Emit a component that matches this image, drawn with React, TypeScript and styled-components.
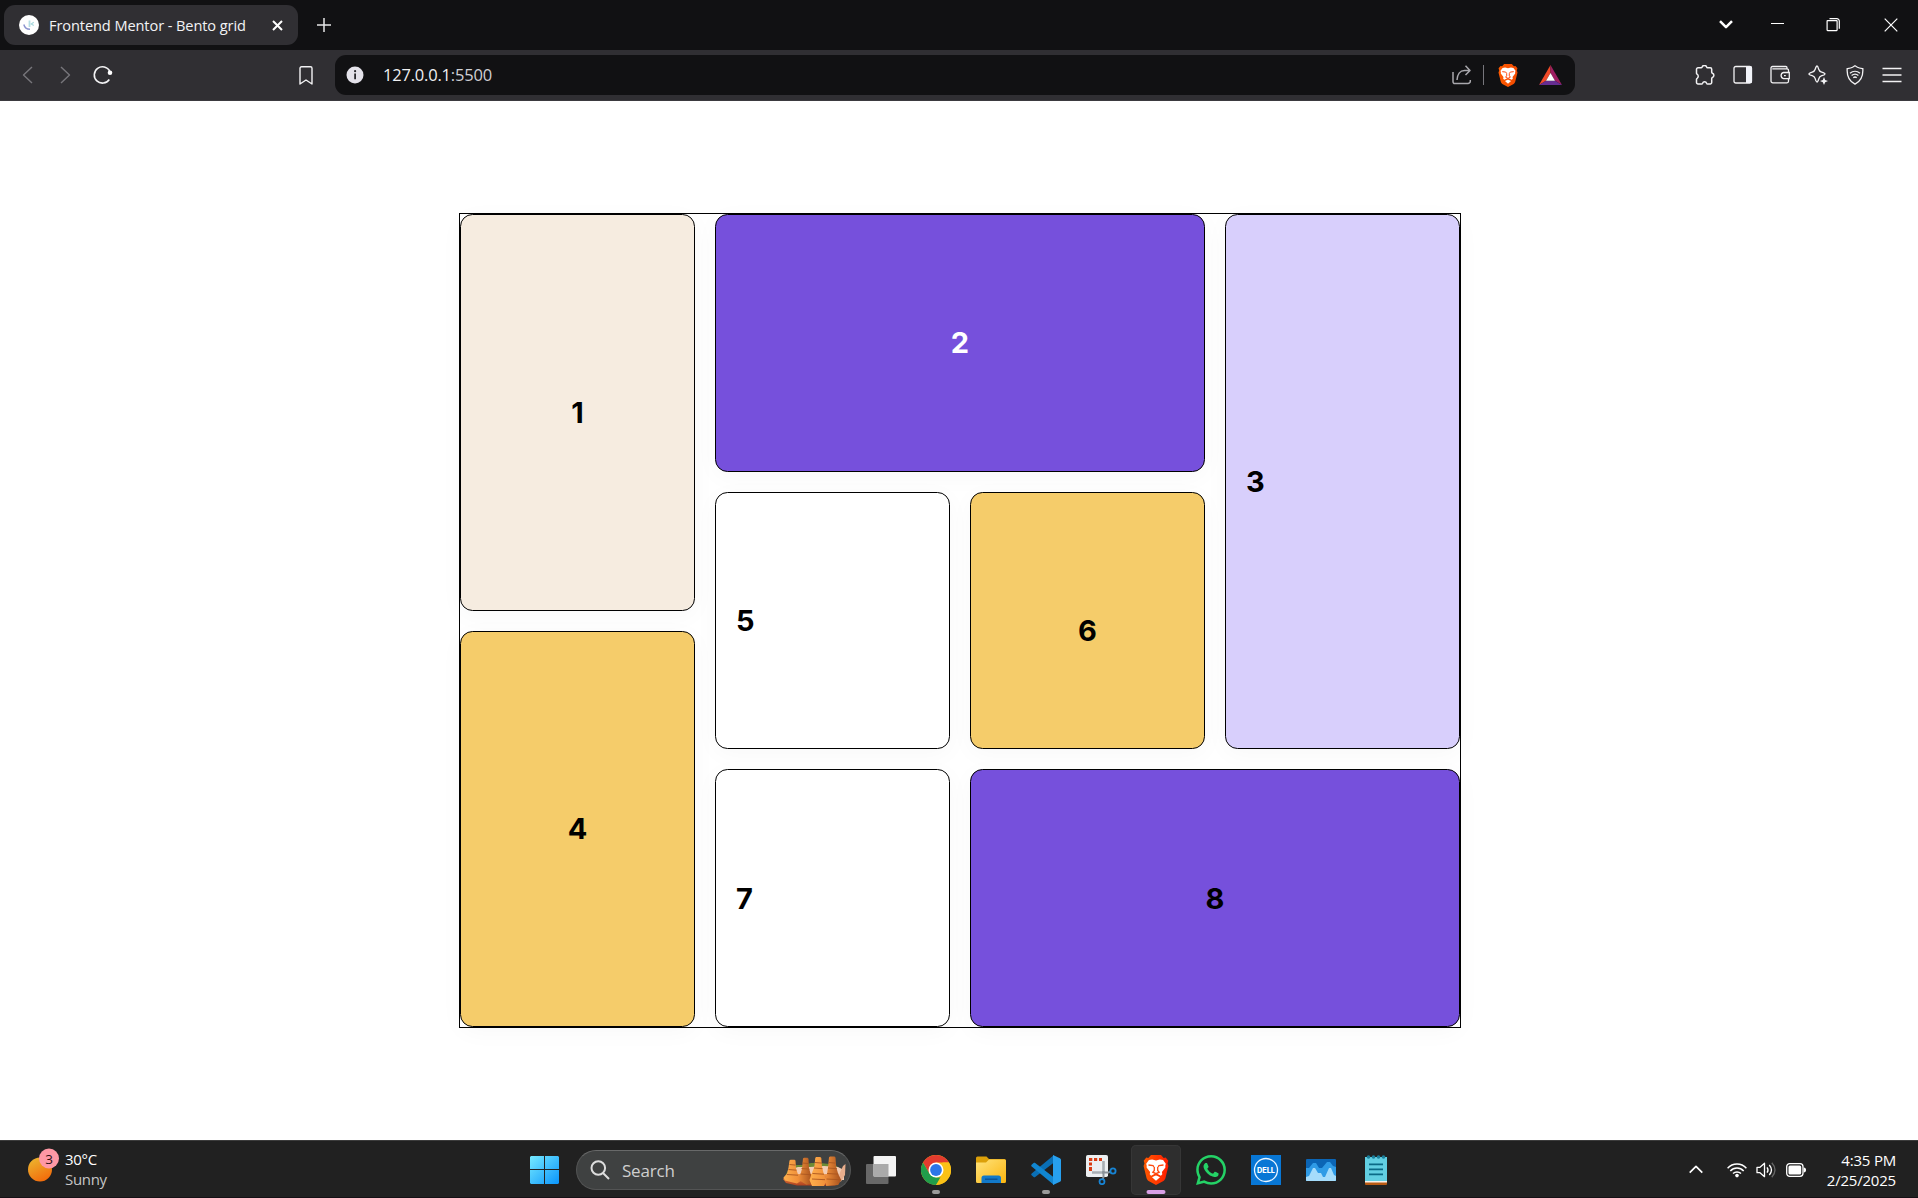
import React from "react";
import styled, { createGlobalStyle } from "styled-components";

const Global = createGlobalStyle`
  * { box-sizing: border-box; }
  html, body { margin: 0; padding: 0; background: #fff; }
  body { overflow: hidden; }
  svg { display: block; flex: none; }
`;

const ui = `"Open Sans", "Noto Sans", sans-serif`;

const Screen = styled.div`
  width: 1918px;
  height: 1198px;
  display: flex;
  flex-direction: column;
  font-family: ${ui};
  background: #fff;
`;

/* ---------- browser chrome ---------- */
const TabStrip = styled.header`
  height: 50px;
  flex: none;
  display: flex;
  align-items: flex-start;
  justify-content: space-between;
  background: #111113;
`;
const TabGroup = styled.div`
  display: flex;
  align-items: center;
  padding: 5px 0 0 4px;
  gap: 19px;
`;
const Tab = styled.div`
  width: 294px;
  height: 40px;
  border-radius: 11px;
  background: #302f33;
  display: flex;
  align-items: center;
  padding: 0 15px 0 15px;
`;
const TabTitle = styled.span`
  flex: 1;
  margin-left: 10px;
  color: #f3f3f5;
  font-size: 14.6px;
  letter-spacing: -0.1px;
  line-height: 20px;
  white-space: nowrap;
`;
const WindowControls = styled.div`
  display: flex;
  align-items: center;
  height: 49px;
  padding-right: 20px;
`;
const ControlSlot = styled.span<{ $gap: number }>`
  margin-left: ${(p) => p.$gap}px;
`;
const Toolbar = styled.nav`
  height: 51px;
  flex: none;
  display: flex;
  align-items: center;
  background: #302f33;
  border-bottom: 1px solid #3b3a3f;
`;
const NavButtons = styled.div`
  display: flex;
  align-items: center;
  width: 335px;
  padding-left: 16px;
`;
const NavIcon = styled.span<{ $left?: number }>`
  margin-left: ${(p) => p.$left ?? 0}px;
`;
const AddressBar = styled.div`
  width: 1240px;
  height: 40px;
  border-radius: 11px;
  background: #111113;
  display: flex;
  align-items: center;
  padding: 0 13px 0 11px;
`;
const Address = styled.span`
  flex: 1;
  margin-left: 19px;
  color: #f0f0f2;
  font-size: 16.5px;
  letter-spacing: -0.2px;
  line-height: 24px;
`;
const Port = styled.span`
  color: #cfcfd3;
`;
const Divider = styled.span`
  width: 1px;
  height: 20px;
  margin: 0 14px 0 11px;
  background: #77767c;
`;
const Extensions = styled.div`
  flex: 1;
  display: flex;
  align-items: center;
  justify-content: flex-end;
  padding-right: 7px;
`;
const ExtensionSlot = styled.span`
  width: 37.400px;
  display: flex;
  justify-content: center;
`;

/* ---------- page ---------- */
const Page = styled.main`
  flex: 1;
  display: flex;
  justify-content: center;
  padding: 112px 0 0 2px;
`;
const Bento = styled.section`
  width: 1002px;
  height: 815px;
  border: 1px solid #000;
  display: grid;
  grid-template-columns: repeat(4, 1fr);
  grid-template-rows: repeat(6, 1fr);
  gap: 20px;
`;
const Card = styled.article<{ $area: string; $bg: string; $ink?: string; $start?: boolean; $drop?: number }>`
  grid-area: ${(p) => p.$area};
  display: flex;
  align-items: center;
  justify-content: ${(p) => (p.$start ? "flex-start" : "center")};
  padding: ${(p) => 21 + (p.$drop ?? 0)}px 20px 20px;
  border: 1px solid #000;
  border-radius: 12.5px;
  background: ${(p) => p.$bg};
  color: ${(p) => p.$ink ?? "#000"};
  box-shadow: 0 5px 25px rgba(0, 0, 0, 0.03);
  font: 700 29px/38px Inter, sans-serif;
`;

const cards = [
  { n: 1, area: "1 / 1 / span 3 / span 1", bg: "#f6ece0" },
  { n: 2, area: "1 / 2 / span 2 / span 2", bg: "#7650dc", ink: "#fff" },
  { n: 3, area: "1 / 4 / span 4 / span 1", bg: "#d8cffc", start: true },
  { n: 4, area: "4 / 1 / span 3 / span 1", bg: "#f5cc6a" },
  { n: 5, area: "3 / 2 / span 2 / span 1", bg: "#fff", start: true },
  { n: 6, area: "3 / 3 / span 2 / span 1", bg: "#f5cc6a", drop: 20 },
  { n: 7, area: "5 / 2 / span 2 / span 1", bg: "#fff", start: true },
  { n: 8, area: "5 / 3 / span 2 / span 2", bg: "#7650dc" },
];

/* ---------- taskbar ---------- */
const Taskbar = styled.footer`
  height: 58px;
  flex: none;
  display: grid;
  grid-template-columns: 530px 1fr auto;
  background: #212121;
  border-top: 1px solid #3c3c3c;
  border-bottom: 1px solid #151015;
`;
const Weather = styled.div`
  display: flex;
  align-items: center;
  padding-left: 27px;
  gap: 6px;
`;
const WeatherIcon = styled.span`
  margin-bottom: 7px;
`;
const WeatherText = styled.div`
  display: flex;
  flex-direction: column;
  font-size: 15px;
  line-height: 20px;
  letter-spacing: -0.3px;
  color: #fff;
`;
const Muted = styled.span`
  color: #c6c6c6;
`;
const Apps = styled.div`
  display: flex;
  align-items: center;
  padding-top: 2px;
`;
const SearchBox = styled.div`
  width: 275px;
  height: 40px;
  margin: 0 2.5px 0 16px;
  border-radius: 20px;
  border: 1px solid #535454;
  border-top-color: #686969;
  background: #3f4141;
  display: flex;
  align-items: center;
  padding: 0 3px 0 13px;
`;
const SearchLabel = styled.span`
  flex: 1;
  margin-left: 12px;
  font-size: 17px;
  letter-spacing: -0.2px;
  color: #cfcfcf;
`;
const AppButton = styled.div<{ $active?: boolean }>`
  width: 50px;
  height: 50px;
  margin: 0 2.5px;
  border-radius: 5px;
  position: relative;
  display: flex;
  align-items: center;
  justify-content: center;
  background: ${(p) => (p.$active ? "#2e2e2e" : "transparent")};
  box-shadow: ${(p) => (p.$active ? "inset 0 0 0 1px #363636" : "none")};
`;
const Indicator = styled.i<{ $active?: boolean }>`
  position: absolute;
  bottom: 1px;
  left: 50%;
  transform: translateX(-50%);
  width: ${(p) => (p.$active ? 19 : 8)}px;
  height: 4px;
  border-radius: 2px;
  background: ${(p) => (p.$active ? "#d9a0e6" : "#9a9a9a")};
`;
const Tray = styled.div`
  display: flex;
  align-items: center;
  padding: 1px 22px 0 0;
`;
const TraySlot = styled.span<{ $right: number }>`
  margin-right: ${(p) => p.$right}px;
`;
const Clock = styled.div`
  width: 71px;
  white-space: nowrap;
  display: flex;
  flex-direction: column;
  align-items: flex-end;
  font-size: 15px;
  line-height: 20px;
  letter-spacing: -0.2px;
  color: #fff;
`;

/* ---------- icons ---------- */
const Favicon = () => (
  <svg width="20" height="20" viewBox="0 0 20 20">
    <circle cx="10" cy="10" r="10" fill="#fff" />
    <path d="M10.5 5.5v6.5" stroke="#b4dde3" strokeWidth="1.8" />
    <path d="M14.8 7.3L12.2 9l2.6 1.6" stroke="#a9d9de" strokeWidth="1.2" fill="none" />
    <path d="M4.8 9.5c.7 2.800 3 4.700 6.200 4.700" stroke="#8c94cf" strokeWidth="1.4" fill="none" />
  </svg>
);
const Line = ({ d, w, h, s = "#f2f2f4", sw = 1.4 }: { d: string; w: number; h: number; s?: string; sw?: number }) => (
  <svg width={w} height={h} viewBox={`0 0 ${w} ${h}`} fill="none" stroke={s} strokeWidth={sw} strokeLinejoin="round">
    <path d={d} />
  </svg>
);
const Reload = () => (
  <svg width="20" height="20" viewBox="0 0 20 20" fill="none" stroke="#f2f2f4" strokeWidth="1.6">
    <path d="M16.300 14.500A8.200 8.200 0 1 1 16.800 6.200" />
    <circle cx="17" cy="7.800" r="2.300" fill="#fff" stroke="none" />
  </svg>
);
const Info = () => (
  <svg width="18" height="18" viewBox="0 0 18 18">
    <circle cx="9" cy="9" r="8.500" fill="#e4e2ea" />
    <path d="M9.100 7.500V13.200" stroke="#29282c" strokeWidth="1.800" fill="none" />
    <circle cx="9.100" cy="5.200" r="1.100" fill="#29282c" />
  </svg>
);
const BraveLion = ({ w, h, id }: { w: number; h: number; id: string }) => (
  <svg width={w} height={h} viewBox="0 0 26 30">
    <defs>
      <linearGradient id={id} x1="0" x2="1">
        <stop offset="0" stopColor="#ff5a00" />
        <stop offset="1" stopColor={id === "lionBig" ? "#ff1c00" : "#f04a00"} />
      </linearGradient>
    </defs>
    <path fill={`url(#${id})`} d="M8 0h10l2.700 3 2-.4 2.600 3.100-.8 2.700.9 2.600-3 12.300c-.4 1.300-1.100 2-2 2.700L13 30l-7.400-4c-.9-.700-1.600-1.400-2-2.700L.6 11l.9-2.600L.7 5.700l2.600-3.100 2 .4z" />
    <path fill="#fff" d="M13 5.500l3.800-.9 3.300.5 2.700 3.700-.5 1.900.1 1.800-3.500 4.500.4 2.200-1.400 1.500-3.300-1.700-1.600-.3-1.600.3-3.300 1.700-1.400-1.500.4-2.200-3.500-4.500.1-1.800-.5-1.900 2.700-3.700 3.300-.5z" />
    <path fill="#fff" d="M9 22.300l4-2.100 4 2.100-4 3.400z" />
    <path fill="none" stroke="#ff4a10" strokeWidth="1.300" d="M5.500 10l4.500.5 1 1.300M20.500 10l-4.500.5-1 1.300M11.300 12v3.500l-1.500 1.700L13 18.700l3.200-1.500-1.500-1.700V12M13 18.700v1.800" />
  </svg>
);
const BatTriangle = () => (
  <svg width="23" height="20" viewBox="0 0 23 20">
    <path fill="#f04a28" d="M11.500 0L0 20l7-4.300 4.500-7.700z" />
    <path fill="#9e1f63" d="M11.500 0L23 20l-7-4.300L11.500 8z" />
    <path fill="#662d91" d="M0 20h23l-7-4.300H7z" />
    <path fill="#fff" d="M11.500 8L7 15.700h9z" />
  </svg>
);
const SidePanel = () => (
  <svg width="20" height="20" viewBox="0 0 20 20">
    <rect x="1" y="1.500" width="17.500" height="16.500" rx="1.800" fill="none" stroke="#f2f2f4" strokeWidth="1.300" />
    <path d="M13 1.500h5a1 1 0 0 1 1 1V17a1 1 0 0 1-1 1h-5z" fill="#f2f4fa" />
  </svg>
);
const Wallet = () => (
  <svg width="20" height="20" viewBox="0 0 20 20" fill="none" stroke="#f2f2f4" strokeWidth="1.300">
    <path d="M18.500 7V5.300a1.500 1.500 0 0 0-1.500-1.500H2.300M17 3.800V2.700a1.200 1.200 0 0 0-1.200-1.200H2.500A1.500 1.500 0 0 0 1 3v13a1.800 1.800 0 0 0 1.800 1.800H17a1.500 1.500 0 0 0 1.500-1.500V14" />
    <path d="M19.300 7.500h-5.800a3.200 3.200 0 0 0 0 6.200h5.800zM14 10.600h1.800" />
  </svg>
);
const Sparkle = () => (
  <svg width="20" height="20" viewBox="0 0 20 20" fill="none" stroke="#f2f2f4" strokeWidth="1.300" strokeLinejoin="round">
    <path d="M9 1c.8 0 1.200 1.600 1.700 3.300.5 1.700 1.300 2.400 3 2.900 1.800.5 3.300 1 3.300 1.800s-1.500 1.200-3.200 1.700-2.500 1.300-3 3S9.800 17 9 17s-1.300-1.500-1.800-3.300c-.5-1.700-1.200-2.500-3-3S1 9.800 1 9s1.500-1.300 3.200-1.800c1.800-.5 2.500-1.200 3-2.900S8.200 1 9 1z" />
    <path fill="#f2f2f4" stroke="#302f33" strokeWidth="1" paintOrder="stroke" d="M16 12l1.200 2.900 2.800 1.100-2.800 1.200L16 20l-1.200-2.800L12 16l2.800-1.100z" />
  </svg>
);
const ShieldWifi = () => (
  <svg width="18" height="20" viewBox="0 0 18 20" fill="none" stroke="#f2f2f4" strokeWidth="1.300">
    <path d="M9 .8l2.500 1.500c1.500.8 3.200 1 5.300 1.300.5 6.900-1.300 12.300-7.800 15.600C2.500 15.900.700 10.500 1.200 3.600c2.100-.3 3.800-.5 5.300-1.300z" />
    <path d="M4 8.300c3-2.700 7-2.700 10 0M5.600 10.600c2.100-1.800 4.700-1.800 6.800 0M7.300 12.700c1.100-.9 2.300-.9 3.400 0" />
  </svg>
);
const Sun = () => (
  <svg width="32" height="36" viewBox="0 0 32 36">
    <defs>
      <linearGradient id="sun" x1="0.200" y1="0" x2="0.700" y2="1">
        <stop offset="0" stopColor="#ecb52f" />
        <stop offset="1" stopColor="#f3690a" />
      </linearGradient>
    </defs>
    <circle cx="13" cy="21.500" r="12" fill="url(#sun)" />
    <circle cx="22" cy="10.500" r="10" fill="#ff98a5" />
    <text x="22" y="15.500" textAnchor="middle" fontFamily="Open Sans" fontSize="13.500" fill="#301015">3</text>
  </svg>
);
const Windows = () => (
  <svg width="30" height="30" viewBox="0 0 30 30">
    <defs>
      <linearGradient id="win" gradientUnits="userSpaceOnUse" x1="0" y1="0" x2="29" y2="29">
        <stop offset="0" stopColor="#78ecff" />
        <stop offset="1" stopColor="#0a94fb" />
      </linearGradient>
    </defs>
    <path fill="url(#win)" d="M1 1H14V14H0V2zM15 1h13l1 1v12H15zM0 15h14v14H1l-1-1zM15 15h14v13l-1 1H15z" />
  </svg>
);
const Towers = () => (
  <svg width="64" height="32" viewBox="0 0 64 32">
    <defs>
      <linearGradient id="clay" x1="0" x2="1">
        <stop offset="0" stopColor="#ffb04d" />
        <stop offset="0.500" stopColor="#f0903a" />
        <stop offset="1" stopColor="#a6501d" />
      </linearGradient>
      <linearGradient id="base" x1="0" y1="0" x2="0" y2="1">
        <stop offset="0" stopColor="#f0994a" />
        <stop offset="1" stopColor="#b0401e" />
      </linearGradient>
    </defs>
    <path fill="#6d8b35" d="M3 20l3-5 6-4 8 0 8-2 10 0 8 1 8 2 3 6z" />
    <path fill="#f2cdb4" d="M6 16l9-3 12 0 14-1 14 1 6 3 0 10H6z" />
    <path fill="#e9ae8c" d="M60 12l2.500-2-.5 11-4 6.500-3 0 2-9z" />
    <path fill="url(#base)" d="M0 25l5-5 10 0 12 0 12 0 14 0 4 5-1 4-4 2.500H14L3 29z" />
    <path fill="url(#clay)" d="M6.500 6.500l1-.8h4l1 .8.5 8 2 6 5 5-6 4-12-3-1.500-3 3.500-4 1.500-6zM20 4.500l1-.8h3.500l1 1 .5 9.500 2 7 1.500 8-6 1.500-8-5 1.500-4 2-7z" />
    <path fill="url(#clay)" d="M32.300 3.800l1-.8h4l1 1 .7 9 2 8 3 5-3 6-12 0-2.500-6 2-6 2.800-7zM46 3.300l1-.8h4.500l1 1 .7 9.500 2 7 3 6-3 5-12 1-1-5 2-8 1-7z" />
    <path fill="none" stroke="#aa561f" strokeWidth=".9" d="M6.500 10.500l6 .6M5.500 15.500l8 .7M4 20.500l11 .7M19.500 9l6 .6M18.500 14.500l8 .7M17.500 20l10.500.7M32 8.500l7 .6M31 14l8.500.7M29.500 19.500l11.500.7M29 25l13 .7M45.500 8.500l7 .6M45 14l9 .7M44 19.500l11.500.7M43.500 25l13 .7" />
  </svg>
);
const TaskView = () => (
  <svg width="30" height="28" viewBox="0 0 30 28">
    <rect x="0" y="8" width="22.500" height="20" rx="1" fill="#686868" />
    <rect x="7.500" y="0" width="22.500" height="20.500" rx="1" fill="#f4f4f4" />
    <path d="M7.500 8h15v12.500h-15z" fill="#aaa" />
  </svg>
);
const Chrome = () => (
  <svg width="30" height="30" viewBox="0 0 30 30">
    <circle cx="15" cy="15" r="15" fill="#fbc116" />
    <path fill="#e33b2e" d="M15 0a15 15 0 0 1 13 7.500H15L8.500 18.750 2 7.500A15 15 0 0 1 15 0z" />
    <path fill="#219d4b" d="M2 7.500l6.500 11.250L15 22.500h6.500L15 30A15 15 0 0 1 2 7.500z" />
    <path fill="#fbc116" d="M28 7.500A15 15 0 0 1 15 30l6.500-11.250V7.500z" />
    <circle cx="15" cy="15" r="7.500" fill="#fff" />
    <circle cx="15" cy="15" r="5.900" fill="#2c76e8" />
  </svg>
);
const Folder = () => (
  <svg width="30" height="28" viewBox="0 0 30 28">
    <defs>
      <linearGradient id="folder" x1="0" y1="0" x2="1" y2="1">
        <stop offset="0" stopColor="#ffe37c" />
        <stop offset="1" stopColor="#fbb50e" />
      </linearGradient>
    </defs>
    <path fill="#dca009" d="M0 2a1.500 1.500 0 0 1 1.500-1.500h9L13 3h15.500A1.500 1.500 0 0 1 30 4.500V14H0z" />
    <path fill="url(#folder)" d="M0 6.500h10L13 3.500h15.500A1.500 1.500 0 0 1 30 5v20.500a1.500 1.500 0 0 1-1.500 1.500h-27A1.500 1.500 0 0 1 0 25.500z" />
    <path fill="#1279c9" d="M5.500 27v-5a2.500 2.500 0 0 1 2.500-2.500h14.500A2.500 2.500 0 0 1 25 22v5z" />
    <path d="M9 23.200h12.500" stroke="#0b4e91" strokeWidth="1.300" />
  </svg>
);
const VSCode = () => (
  <svg width="30" height="30" viewBox="0 0 30 30">
    <path fill="#0a6fb5" d="M.6 20.300L2.600 22c.5.400 1.100.4 1.600 0L23 7.500V0L.7 18.500c-.6.500-.6 1.300-.1 1.800z" />
    <path fill="#1186d0" d="M.6 9.700L2.600 8c.5-.4 1.100-.4 1.600 0L23 22.500V30L.7 11.500c-.6-.5-.6-1.300-.1-1.800z" />
    <path fill="#27a0ef" d="M22 0l6.900 3.200c.7.300 1.100.9 1.100 1.600v20.400c0 .7-.4 1.300-1.100 1.600L22 30z" />
  </svg>
);
const Snip = () => (
  <svg width="31" height="30" viewBox="0 0 31 30">
    <rect x="0" y="0" width="22" height="22" rx="1.800" fill="#eceff1" />
    <path d="M4.500 16v-4M4.500 10.500v-3M3 4.500h3.300M8 4.500h3.200M13 4.500h3" stroke="#d83b12" strokeWidth="3" fill="none" />
    <path d="M17.500 6v11.500M6 17.500h11.500" stroke="#a9afb4" strokeWidth="2.600" />
    <path d="M17.500 16v6l-1 2.500M16 17.500h6.500l2-1" stroke="#8a9299" strokeWidth="2" fill="none" />
    <circle cx="27" cy="16" r="2.600" fill="none" stroke="#1784d4" strokeWidth="1.800" />
    <circle cx="16" cy="26.700" r="2.500" fill="none" stroke="#1784d4" strokeWidth="1.800" />
  </svg>
);
const WhatsApp = () => (
  <svg width="30" height="30" viewBox="0 0 24 24" fill="#24d266">
    <path d="M17.472 14.382c-.297-.149-1.758-.867-2.030-.967-.273-.099-.471-.148-.670.150-.197.297-.767.966-.940 1.164-.173.199-.347.223-.644.075-.297-.150-1.255-.463-2.390-1.475-.883-.788-1.480-1.761-1.653-2.059-.173-.297-.018-.458.130-.606.134-.133.298-.347.446-.520.149-.174.198-.298.298-.497.099-.198.050-.371-.025-.520-.075-.149-.669-1.612-.916-2.207-.242-.579-.487-.5-.669-.510-.173-.008-.371-.010-.570-.010-.198 0-.520.074-.792.372-.272.297-1.040 1.016-1.040 2.479 0 1.462 1.065 2.875 1.213 3.074.149.198 2.096 3.200 5.077 4.487.709.306 1.262.489 1.694.625.712.227 1.360.195 1.871.118.571-.085 1.758-.719 2.006-1.413.248-.694.248-1.289.173-1.413-.074-.124-.272-.198-.570-.347m-5.421 7.403h-.004a9.870 9.870 0 0 1-5.031-1.378l-.361-.214-3.741.982.998-3.648-.235-.374a9.860 9.860 0 0 1-1.510-5.260c.001-5.450 4.436-9.884 9.888-9.884 2.640 0 5.122 1.030 6.988 2.898a9.825 9.825 0 0 1 2.893 6.994c-.003 5.450-4.437 9.884-9.885 9.884m8.413-18.297A11.815 11.815 0 0 0 12.050 0C5.495 0 .160 5.335.157 11.892c0 2.096.547 4.142 1.588 5.945L.057 24l6.305-1.654a11.882 11.882 0 0 0 5.683 1.448h.005c6.554 0 11.890-5.335 11.893-11.893a11.821 11.821 0 0 0-3.480-8.413z" />
  </svg>
);
const Dell = () => (
  <svg width="30" height="30" viewBox="0 0 30 30">
    <rect width="30" height="30" fill="#0877d5" />
    <circle cx="15" cy="15" r="11.500" fill="none" stroke="#eaf5ff" strokeWidth="1.300" />
    <text x="15" y="17.600" textAnchor="middle" textLength="18" lengthAdjust="spacingAndGlyphs" fontFamily="Inter" fontWeight="800" fontSize="7" fill="#fff">DELL</text>
  </svg>
);
const Monitor = () => (
  <svg width="30" height="22" viewBox="0 0 30 22">
    <rect width="30" height="22" rx="1" fill="#0b65b5" />
    <path fill="#2f9be6" d="M0 9l3 0 4-5 3 0 3 5 3 0 5-6 3 0 3 4 3 1v14H0z" />
    <path fill="#a5dcfb" d="M0 21V18l3-1 4-8 2 0 3 5 3 0 2 4 2 0 4-9 2 0 3 7 2 1v4a1 1 0 0 1-1 1H1a1 1 0 0 1-1-1z" />
  </svg>
);
const Notepad = () => (
  <svg width="22" height="30" viewBox="0 0 22 30">
    <path fill="#b95a13" d="M0 25h22v4a1 1 0 0 1-1 1H1a1 1 0 0 1-1-1z" />
    <path fill="#f5f0ea" d="M0 24h22v3.500H0z" />
    <rect y="2" width="22" height="24" fill="#62cfe2" />
    <path d="M4 9.300h14M4 14.300h14M4 19.300h14" stroke="#0b6a86" strokeWidth="1.700" />
    <g fill="#1b7f9b">
      <circle cx="3.500" cy="2" r="1.800" /><circle cx="8.500" cy="2" r="1.800" /><circle cx="13.500" cy="2" r="1.800" /><circle cx="18.500" cy="2" r="1.800" />
    </g>
  </svg>
);
const Wifi = () => (
  <svg width="20" height="16" viewBox="0 0 20 16" fill="none" stroke="#fff" strokeWidth="1.500">
    <path d="M.6 6.200c5.200-5.600 13.600-5.600 18.800 0M3.300 9c3.700-4 9.700-4 13.400 0M6 11.600c2.200-2.300 5.800-2.300 8 0" />
    <circle cx="10" cy="13.600" r="1.800" fill="#fff" stroke="none" />
  </svg>
);
const Speaker = () => (
  <svg width="21" height="18" viewBox="0 0 21 18" fill="none" stroke="#fff" strokeWidth="1.300">
    <path strokeLinejoin="round" d="M1 6.300h3l4.500-4v13.400l-4.500-4H1z" />
    <path d="M11 6.300c1.300 1.700 1.300 3.700 0 5.400M13.300 4c2.800 3.200 2.800 6.800 0 10" />
    <path stroke="#666" d="M15.800 1.800c4 4.500 4 9.900 0 14.400" />
  </svg>
);
const Battery = () => (
  <svg width="20" height="14" viewBox="0 0 20 14">
    <rect x=".7" y=".7" width="16.300" height="12.600" rx="3" fill="none" stroke="#fff" strokeWidth="1.300" />
    <rect x="2.500" y="2.500" width="12.700" height="9" rx="1.500" fill="#fff" />
    <path fill="#fff" d="M17.700 4.500c1.600.2 2.300 1 2.300 2.500s-.7 2.300-2.300 2.500z" />
  </svg>
);

const apps: { name: string; icon: React.ReactNode; running?: boolean; active?: boolean }[] = [
  { name: "task-view", icon: <TaskView /> },
  { name: "chrome", icon: <Chrome />, running: true },
  { name: "explorer", icon: <Folder /> },
  { name: "code", icon: <VSCode />, running: true },
  { name: "snip", icon: <Snip /> },
  { name: "brave", icon: <BraveLion w={26} h={30} id="lionBig" />, running: true, active: true },
  { name: "whatsapp", icon: <WhatsApp /> },
  { name: "dell", icon: <Dell /> },
  { name: "monitor", icon: <Monitor /> },
  { name: "notepad", icon: <Notepad /> },
];

export default function App() {
  return (
    <Screen>
      <Global />
      <TabStrip>
        <TabGroup>
          <Tab>
            <Favicon />
            <TabTitle>Frontend Mentor - Bento grid</TabTitle>
            <Line w={11} h={11} sw={2} s="#fff" d="M1 1l9 9M10 1l-9 9" />
          </Tab>
          <Line w={14} h={14} s="#e6e6e8" sw={1.500} d="M7 0v14M0 7h14" />
        </TabGroup>
        <WindowControls>
          <Line w={14} h={9} sw={2.500} s="#fff" d="M1 1.200l6 6 6-6" />
          <ControlSlot $gap={38}>
            <Line w={14} h={3} sw={1} s="#fff" d="M0 .5h13" />
          </ControlSlot>
          <ControlSlot $gap={41}>
            <Line w={14} h={14} sw={1.200} s="#fff" d="M1.600 2.600h9a.5.5 0 0 1 .5.500v9a.5.5 0 0 1-.5.500h-9a.5.5 0 0 1-.5-.500v-9a.5.5 0 0 1 .5-.500zM3.500 .7h7.300a2.500 2.500 0 0 1 2.500 2.500v7.500" />
          </ControlSlot>
          <ControlSlot $gap={44}>
            <Line w={14} h={14} sw={1.200} s="#fff" d="M.7.7l12.600 12.600M13.300.7L.7 13.300" />
          </ControlSlot>
        </WindowControls>
      </TabStrip>

      <Toolbar>
        <NavButtons>
          <NavIcon $left={6}><Line w={11} h={18} s="#77767b" d="M10 1L1.500 9l8.500 8" /></NavIcon>
          <NavIcon $left={27}><Line w={11} h={18} s="#77767b" d="M1 1l8.500 8L1 17" /></NavIcon>
          <NavIcon $left={22}><Reload /></NavIcon>
          <NavIcon $left={186}><Line w={14} h={19} d="M1 2.300a1.500 1.500 0 0 1 1.500-1.500h9A1.500 1.500 0 0 1 13 2.300V18l-6-4-6 4z" /></NavIcon>
        </NavButtons>
        <AddressBar>
          <Info />
          <Address>127.0.0.1<Port>:5500</Port></Address>
          <Line w={20} h={20} s="#a9a8ad" sw={1.500} d="M1 7v9.500A1.800 1.800 0 0 0 2.800 18.500H16a2.300 2.300 0 0 0 2.300-2.300V15M5 15c.3-5.500 3-9.500 7.500-9.500H18M13.500.8L18 5.500l-4.500 4.500" />
          <Divider />
          <BraveLion w={20} h={23} id="lionSmall" />
          <NavIcon $left={21}><BatTriangle /></NavIcon>
        </AddressBar>
        <Extensions>
          <ExtensionSlot>
            <Line w={22} h={20} sw={1.500} d="M4 2.800h3.300c.6 0 .8-.2.800-.7a2.400 2.400 0 0 1 4.600 0c.1.500.3.7.8.7h2.700a1.500 1.500 0 0 1 1.500 1.500v3c0 .5.200.7.700.9a2.300 2.300 0 0 1 0 4.300c-.5.200-.7.400-.7.900v4a1.500 1.500 0 0 1-1.500 1.500h-2.700c-.5 0-.7-.2-.9-.7a2.100 2.100 0 0 0-4 0c-.2.500-.4.700-.9.700H4a1.500 1.500 0 0 1-1.500-1.500v-3.200c0-.5.200-.7.600-.9a2.400 2.400 0 0 0 0-4.100c-.4-.2-.6-.4-.6-.9v-4A1.500 1.500 0 0 1 4 2.800z" />
          </ExtensionSlot>
          <ExtensionSlot><SidePanel /></ExtensionSlot>
          <ExtensionSlot><Wallet /></ExtensionSlot>
          <ExtensionSlot><Sparkle /></ExtensionSlot>
          <ExtensionSlot><ShieldWifi /></ExtensionSlot>
          <ExtensionSlot><Line w={20} h={18} sw={1.500} d="M.5 2.500h19M.5 9h19M.5 15.500h19" /></ExtensionSlot>
        </Extensions>
      </Toolbar>

      <Page>
        <Bento>
          {cards.map((c) => (
            <Card key={c.n} $area={c.area} $bg={c.bg} $ink={c.ink} $start={c.start} $drop={c.drop}>
              {c.n}
            </Card>
          ))}
        </Bento>
      </Page>

      <Taskbar>
        <Weather>
          <WeatherIcon><Sun /></WeatherIcon>
          <WeatherText>
            <span>30°C</span>
            <Muted>Sunny</Muted>
          </WeatherText>
        </Weather>
        <Apps>
          <Windows />
          <SearchBox>
            <Line w={20} h={20} sw={2} s="#ddd" d="M1.500 8a6.800 6.800 0 1 0 13.600 0A6.800 6.800 0 1 0 1.500 8M13 13l6 6" />
            <SearchLabel>Search</SearchLabel>
            <Towers />
          </SearchBox>
          {apps.map((a) => (
            <AppButton key={a.name} $active={a.active}>
              {a.icon}
              {a.running && <Indicator $active={a.active} />}
            </AppButton>
          ))}
        </Apps>
        <Tray>
          <TraySlot $right={24}><Line w={14} h={9} sw={1.700} s="#fff" d="M.7 7.700L7 1.300l6.300 6.400" /></TraySlot>
          <TraySlot $right={9}><Wifi /></TraySlot>
          <TraySlot $right={9}><Speaker /></TraySlot>
          <TraySlot $right={19}><Battery /></TraySlot>
          <Clock>
            <span>4:35 PM</span>
            <span>2/25/2025</span>
          </Clock>
        </Tray>
      </Taskbar>
    </Screen>
  );
}
